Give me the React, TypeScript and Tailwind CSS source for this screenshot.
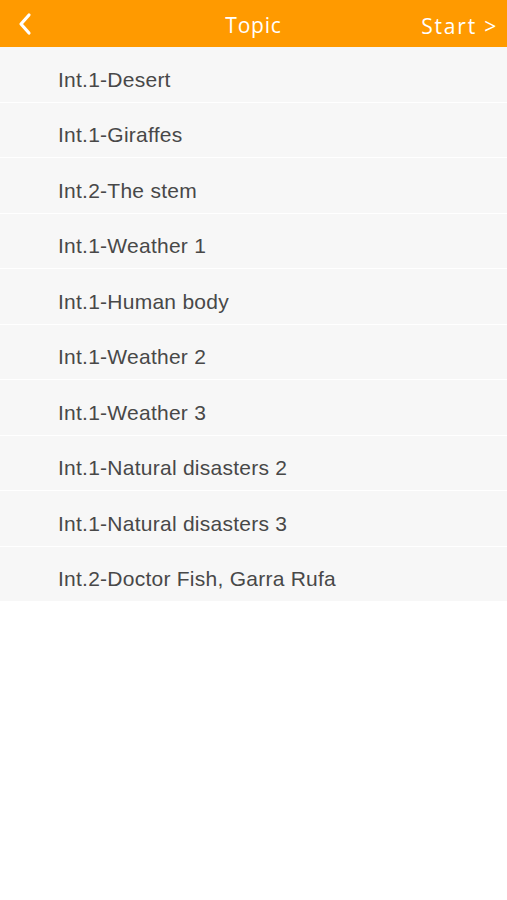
import React from "react";

const items = [
  "Int.1-Desert",
  "Int.1-Giraffes",
  "Int.2-The stem",
  "Int.1-Weather 1",
  "Int.1-Human body",
  "Int.1-Weather 2",
  "Int.1-Weather 3",
  "Int.1-Natural disasters 2",
  "Int.1-Natural disasters 3",
  "Int.2-Doctor Fish, Garra Rufa",
];

export default function App() {
  return (
    <div className="w-[507px] min-h-[900px] bg-white">
      <div className="relative flex h-[47px] items-center justify-center bg-[#ff9a00] text-white [font-family:'Open_Sans',sans-serif]">
        <svg className="absolute left-[17px] top-[12px]" width="16" height="24" viewBox="0 0 16 24" fill="none">
          <path d="M12 3 L4 12 L12 21" stroke="white" strokeWidth="3.2" strokeLinecap="round" strokeLinejoin="round" />
        </svg>
        <span className="mt-[5px] text-[21px] tracking-[0.8px]">Topic</span>
        <span className="absolute right-[9px] top-[11px] text-[21px] tracking-[1.8px]">Start &gt;</span>
      </div>
      <div className="[font-family:'Liberation_Sans',Arial,sans-serif]">
        {items.map((t) => (
          <div
            key={t}
            className="flex h-[55.5px] items-center border-b border-white bg-[#f7f7f7] pl-[58px] pt-[10px] text-[21px] tracking-[0.25px] text-[#484848]"
          >
            {t}
          </div>
        ))}
      </div>
    </div>
  );
}
